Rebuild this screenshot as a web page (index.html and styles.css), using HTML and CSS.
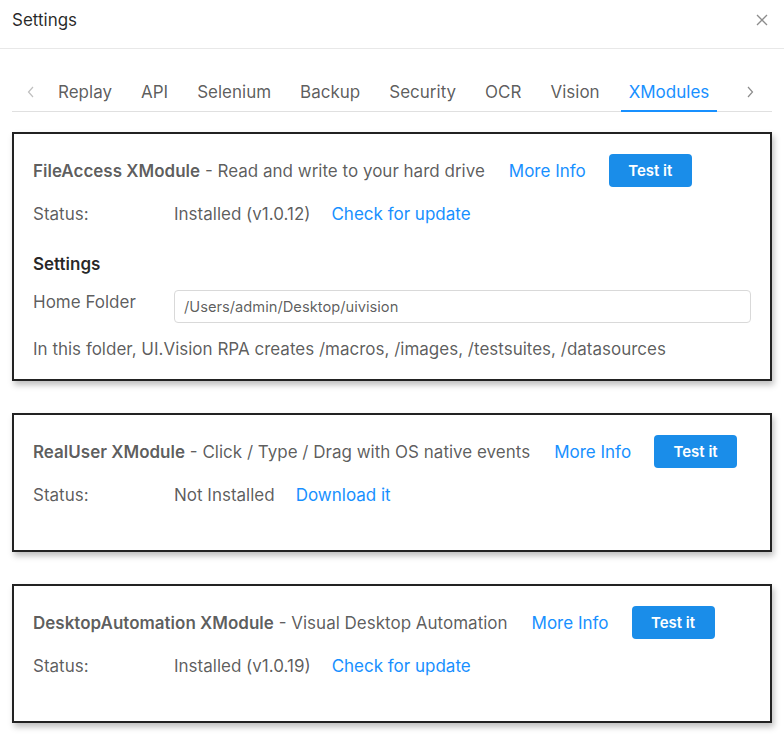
FILE: index.html
```html
<!DOCTYPE html>
<html lang="en">
<head>
  <meta charset="UTF-8">
  <meta name="viewport" content="width=device-width, initial-scale=1.0">
  <title>Settings</title>
  <link rel="stylesheet" href="styles.css">
</head>
<body>
  <div class="modal">
    <div class="modal-header">
      <span class="modal-title">Settings</span>
      <span class="modal-close">
        <svg width="12" height="12" viewBox="0 0 12 12"><path d="M1 1L11 11M11 1L1 11" stroke="#8c8c8c" stroke-width="1.3" fill="none"/></svg>
      </span>
    </div>

    <div class="tabs-nav">
      <span class="tab-arrow">
        <svg width="8" height="12" viewBox="0 0 8 12"><path d="M6 1L1.5 6L6 11" stroke="#bfbfbf" stroke-width="1.2" fill="none"/></svg>
      </span>
      <div class="tab-list">
        <div class="tab">Replay</div>
        <div class="tab">API</div>
        <div class="tab">Selenium</div>
        <div class="tab">Backup</div>
        <div class="tab">Security</div>
        <div class="tab">OCR</div>
        <div class="tab">Vision</div>
        <div class="tab active">XModules</div>
      </div>
      <span class="tab-arrow right">
        <svg width="8" height="12" viewBox="0 0 8 12"><path d="M2 1L6.5 6L2 11" stroke="#8c8c8c" stroke-width="1.2" fill="none"/></svg>
      </span>
    </div>

    <div class="module">
      <div class="module-head">
        <span class="module-name"><b>FileAccess XModule</b> - Read and write to your hard drive</span>
        <a class="link" href="#">More Info</a>
        <button class="btn">Test it</button>
      </div>
      <div class="row status-row">
        <span class="label">Status:</span>
        <span>Installed (v1.0.12)</span>
        <a class="link" href="#">Check for update</a>
      </div>
      <div class="settings-title">Settings</div>
      <div class="row field-row">
        <span class="label">Home Folder</span>
        <input class="text-input" type="text" value="/Users/admin/Desktop/uivision">
      </div>
      <div class="row hint">In this folder, UI.Vision RPA creates /macros, /images, /testsuites, /datasources</div>
    </div>

    <div class="module">
      <div class="module-head">
        <span class="module-name"><b>RealUser XModule</b> - Click / Type / Drag with OS native events</span>
        <a class="link" href="#">More Info</a>
        <button class="btn">Test it</button>
      </div>
      <div class="row status-row">
        <span class="label">Status:</span>
        <span>Not Installed</span>
        <a class="link" href="#">Download it</a>
      </div>
    </div>

    <div class="module">
      <div class="module-head">
        <span class="module-name"><b>DesktopAutomation XModule</b> - Visual Desktop Automation</span>
        <a class="link" href="#">More Info</a>
        <button class="btn">Test it</button>
      </div>
      <div class="row status-row">
        <span class="label">Status:</span>
        <span>Installed (v1.0.19)</span>
        <a class="link" href="#">Check for update</a>
      </div>
    </div>
  </div>
</body>
</html>
```

FILE: styles.css
```css
body {
  margin: 0;
  background: #fff;
  font-family: Inter, "Liberation Sans", Arial, sans-serif;
  font-size: 17px;
  color: rgba(0, 0, 0, 0.65);
}
.modal {
  width: 784px;
}
.modal-header {
  display: flex;
  align-items: center;
  justify-content: space-between;
  height: 48px;
  padding: 0 16px 0 12px;
  border-bottom: 1px solid #e8e8e8;
}
.modal-title {
  font-size: 17px;
  color: rgba(0, 0, 0, 0.85);
  margin-top: -9px;
}
.modal-close {
  display: flex;
  margin-top: -9px;
}

/* Tabs */
.tabs-nav {
  display: flex;
  align-items: center;
  margin: 23px 12px 0;
  border-bottom: 1px solid #e0e0e0;
}
.tab-arrow {
  width: 38px;
  display: flex;
  justify-content: center;
}
.tab-arrow.right {
  width: 44px;
}
.tab-list {
  flex: 1;
  display: flex;
  gap: 13px;
}
.tab {
  padding: 9px 8px 7px;
  line-height: 22px;
  border-bottom: 2px solid transparent;
  margin-bottom: -1px;
}
.tab.active {
  color: #1890ff;
  border-bottom-color: #1890ff;
}

/* Module cards */
.module {
  margin: 20px 12px 32px;
  border: 2px solid #222;
  padding: 20px 19px 19px;
  box-shadow: 2px 4px 6px rgba(0, 0, 0, 0.25);
  line-height: 22px;
}
.module-head {
  display: flex;
  align-items: center;
  height: 33px;
}
.module-name b {
  font-weight: 600;
}
.link {
  color: #1890ff;
  text-decoration: none;
  margin-left: 24px;
}
.btn {
  margin-left: 23px;
  width: 83px;
  height: 33px;
  border: none;
  border-radius: 4px;
  background: #1a8de9;
  color: #fff;
  font-family: inherit;
  font-size: 15px;
  font-weight: 600;
}
.row {
  display: flex;
  margin-top: 15px;
}
.status-row {
  margin-top: 16px;
  padding-bottom: 25px;
}
.status-row .link {
  margin-left: 21px;
}
.label {
  width: 141px;
  flex-shrink: 0;
}
.settings-title {
  margin-top: 3px;
  font-weight: 600;
  color: rgba(0, 0, 0, 0.85);
}
.field-row .label {
  padding-top: 1px;
}
.text-input {
  flex: 1;
  height: 33px;
  box-sizing: border-box;
  border: 1px solid #d9d9d9;
  border-radius: 4px;
  padding: 0 9px;
  font-family: inherit;
  font-size: 14.7px;
  color: rgba(0, 0, 0, 0.65);
}
.hint {
  margin-top: 15px;
}
```
